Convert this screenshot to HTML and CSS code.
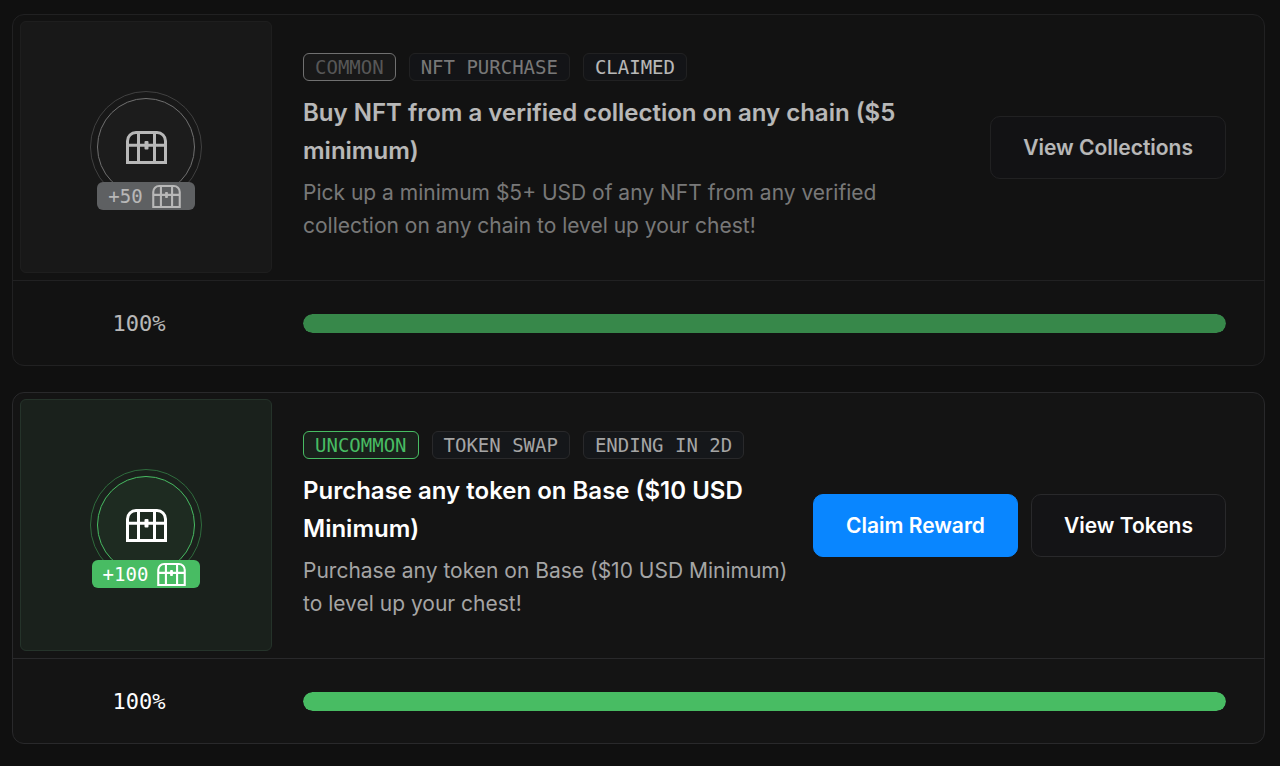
FILE: index.html
```html
<!DOCTYPE html>
<html lang="en">
<head>
  <meta charset="UTF-8">
  <title>Voyages</title>
  <meta name="viewport" content="width=device-width, initial-scale=1.0">
  <link rel="stylesheet" href="styles.css">
</head>
<body>
  <!-- chest icon, reused in the circles and in the badges -->
  <svg class="sprite" aria-hidden="true">
    <symbol id="chest" viewBox="0 0 41 33">
      <path d="M1.5 31.5V10a8.500 8.500 0 0 1 8.500-8.500h21a8.500 8.500 0 0 1 8.500 8.500v21.500z M1.500 14.200h38 M12.500 1.500v30 M28.500 1.500v30" fill="none" stroke="currentColor" stroke-width="3"/>
      <rect x="18.500" y="10" width="4" height="8.500" rx="1" fill="currentColor"/>
    </symbol>
  </svg>

  <main class="voyages">
    <article class="card claimed">
      <div class="card-top">
        <div class="tile">
          <div class="ring"><div class="circle"><svg class="chest"><use href="#chest"/></svg></div></div>
          <div class="points">+50 <svg class="chest-small"><use href="#chest"/></svg></div>
        </div>
        <div class="info">
          <div class="tags">
            <span class="tag rarity">COMMON</span>
            <span class="tag">NFT PURCHASE</span>
            <span class="tag status">CLAIMED</span>
          </div>
          <h2>Buy NFT from a verified collection on any chain ($5 minimum)</h2>
          <p>Pick up a minimum $5+ USD of any NFT from any verified collection on any chain to level up your chest!</p>
        </div>
        <div class="actions">
          <button type="button">View Collections</button>
        </div>
      </div>
      <div class="card-bottom">
        <span class="percent">100%</span>
        <div class="track"><div class="bar" style="width:100%"></div></div>
      </div>
    </article>

    <article class="card uncommon">
      <div class="card-top">
        <div class="tile">
          <div class="ring"><div class="circle"><svg class="chest"><use href="#chest"/></svg></div></div>
          <div class="points">+100 <svg class="chest-small"><use href="#chest"/></svg></div>
        </div>
        <div class="info">
          <div class="tags">
            <span class="tag rarity">UNCOMMON</span>
            <span class="tag">TOKEN SWAP</span>
            <span class="tag">ENDING IN 2D</span>
          </div>
          <h2>Purchase any token on Base ($10 USD Minimum)</h2>
          <p>Purchase any token on Base ($10 USD Minimum) to level up your chest!</p>
        </div>
        <div class="actions">
          <button type="button" class="primary">Claim Reward</button>
          <button type="button">View Tokens</button>
        </div>
      </div>
      <div class="card-bottom">
        <span class="percent">100%</span>
        <div class="track"><div class="bar" style="width:100%"></div></div>
      </div>
    </article>
  </main>
</body>
</html>
```
FILE: styles.css
```css
* {
  box-sizing: border-box;
}
body {
  margin: 0;
  background: #101010;
  color: #fff;
  font-family: Inter, "Liberation Sans", sans-serif;
}
.sprite {
  position: absolute;
  width: 0;
  height: 0;
}
.voyages {
  display: flex;
  flex-direction: column;
  gap: 26px;
  padding: 14px 15px 22px 12px;
}
.card {
  --accent: #808285;
  --rarity: #757575;
  --rarity-border: #999;
  --ring: #555;
  --tile: #1c1c1c;
  --tile-border: #252525;
  --circle: #222;
  background: #141414;
  border: 1px solid #29292b;
  border-radius: 12px;
}
.card.uncommon {
  --accent: #48bc63;
  --rarity: #48bc63;
  --rarity-border: #48bc63;
  --ring: #2f6b3d;
  --tile: #1a211c;
  --tile-border: #25332a;
  --circle: #1e2b21;
}
.claimed {
  opacity: 0.7;
}
.card-top {
  display: flex;
  align-items: center;
  padding: 6px 38px 7px 7px;
}
.tile {
  position: relative;
  display: flex;
  flex: none;
  align-items: center;
  justify-content: center;
  width: 252px;
  height: 252px;
  background: var(--tile);
  border: 1px solid var(--tile-border);
  border-radius: 6px;
}
.ring {
  padding: 6px;
  border: 1px solid var(--ring);
  border-radius: 50%;
}
.circle {
  display: flex;
  align-items: center;
  justify-content: center;
  width: 98px;
  height: 98px;
  background: var(--circle);
  border: 1px solid var(--rarity-border);
  border-radius: 50%;
}
.chest {
  width: 41px;
  height: 33px;
}
.chest-small {
  width: 29px;
  height: 23px;
}
/* sits over the lower edge of the ring */
.points {
  position: absolute;
  bottom: 62px;
  display: flex;
  align-items: center;
  gap: 9px;
  height: 28px;
  padding: 0 14px 0 11px;
  background: var(--accent);
  border-radius: 6px;
  font: 19px "DejaVu Sans Mono", monospace;
}
.info {
  flex: 1;
  min-width: 0;
  margin: 0 22px 0 31px;
}
.tags {
  display: flex;
  gap: 13px;
}
.tag {
  height: 28px;
  padding: 0 11px;
  background: #15171a;
  border: 1px solid #29292b;
  border-radius: 6px;
  color: #a5a5a5;
  font: 19px/26px "DejaVu Sans Mono", monospace;
  white-space: nowrap;
}
.rarity {
  background: var(--tile);
  border-color: var(--rarity-border);
  color: var(--rarity);
}
.status {
  color: #fff;
}
h2 {
  margin: 13px 0 6px;
  font-size: 24px;
  font-weight: 600;
  line-height: 38px;
}
p {
  margin: 0;
  color: #a5a5a5;
  font-size: 21px;
  line-height: 33px;
}
.actions {
  display: flex;
  flex: none;
  gap: 13px;
}
button {
  height: 63px;
  padding: 0 32px;
  background: #141416;
  border: 1px solid #29292b;
  border-radius: 10px;
  color: #fff;
  font: 600 21px Inter, "Liberation Sans", sans-serif;
  white-space: nowrap;
  cursor: pointer;
}
.primary {
  background: #0986ff;
  border-color: #0986ff;
}
.card-bottom {
  display: flex;
  align-items: center;
  height: 85px;
  padding-right: 38px;
  border-top: 1px solid #29292b;
}
.percent {
  flex: none;
  width: 252px;
  margin-right: 38px;
  font: 22px "DejaVu Sans Mono", monospace;
  text-align: center;
}
.track {
  flex: 1;
  height: 19px;
  background: #222;
  border-radius: 10px;
  overflow: hidden;
}
.bar {
  height: 100%;
  background: #48bc63;
  border-radius: 10px;
}
```
